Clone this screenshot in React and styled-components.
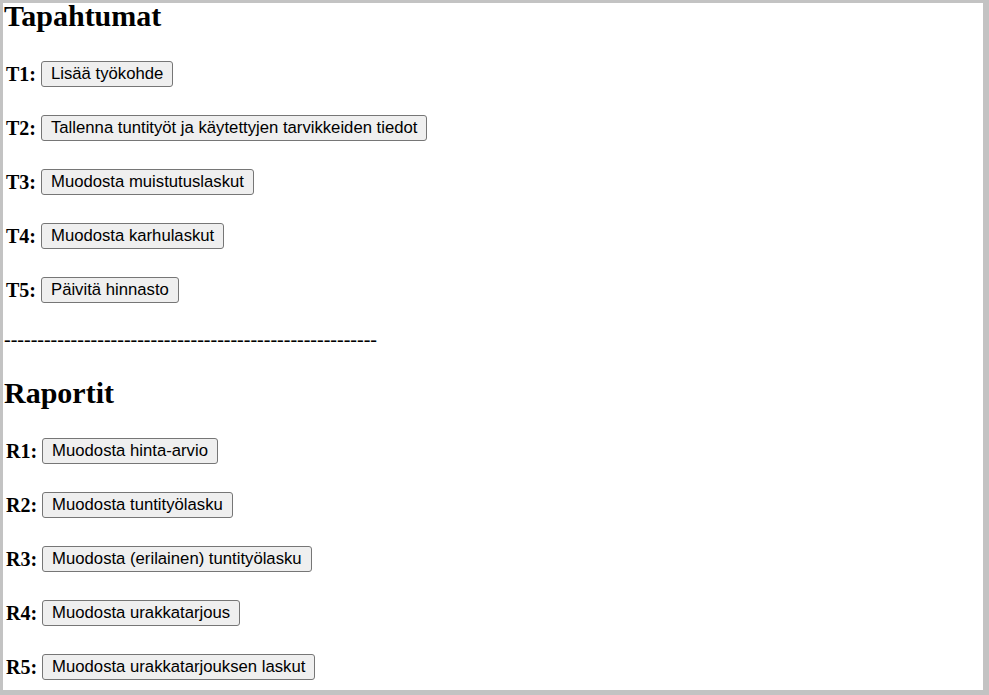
import React from 'react';
import styled, { createGlobalStyle } from 'styled-components';

const GlobalStyle = createGlobalStyle`
    html, body {
        margin: 0;
        padding: 0;
        background: #c3c3c3;
    }
`;

const Frame = styled.div`
    margin: 3px 6px 6px 3px;
    height: 686px;
    background: #ffffff;
    overflow: hidden;
    padding: 1px 0 0 1px;
    font-family: "Liberation Serif", "Times New Roman", serif;
    color: #000;
`;

const Heading = styled.h2`
    margin: ${(props) => props.$top}px 0 31px 0;
    font-size: 30px;
    line-height: 28px;
    font-weight: bold;
`;

const List = styled.div`
    display: flex;
    flex-direction: column;
    gap: 28px;
`;

const Row = styled.div`
    display: flex;
    align-items: center;
    gap: 5px;
    height: 26px;
    margin-left: 2px;
`;

const Label = styled.b`
    font-size: 20px;
    line-height: 26px;
    min-width: ${(props) => props.$width}px;
`;

const Button = styled.button`
    height: 26px;
    padding: 0 9px;
    font-family: "Liberation Sans", Arial, sans-serif;
    font-size: 16.7px;
    color: #000;
    background: #efefef;
    border: 1px solid #767676;
    border-radius: 3px;
`;

const Divider = styled.div`
    margin-top: 25px;
    font-size: 20px;
    line-height: 23px;
    white-space: nowrap;
`;

const events = [
    ['T1:', 'Lisää työkohde'],
    ['T2:', 'Tallenna tuntityöt ja käytettyjen tarvikkeiden tiedot'],
    ['T3:', 'Muodosta muistutuslaskut'],
    ['T4:', 'Muodosta karhulaskut'],
    ['T5:', 'Päivitä hinnasto']
];

const reports = [
    ['R1:', 'Muodosta hinta-arvio'],
    ['R2:', 'Muodosta tuntityölasku'],
    ['R3:', 'Muodosta (erilainen) tuntityölasku'],
    ['R4:', 'Muodosta urakkatarjous'],
    ['R5:', 'Muodosta urakkatarjouksen laskut']
];

const Section = ({ title, items, top, labelWidth }) => (
    <div>
        <Heading $top={top}>{title}</Heading>
        <List>
            {items.map(([label, text]) => (
                <Row key={label}>
                    <Label $width={labelWidth}>{label}</Label>
                    <Button type="button">{text}</Button>
                </Row>
            ))}
        </List>
    </div>
);

const App = () => (
    <>
        <GlobalStyle />
        <Frame>
            <Section title="Tapahtumat" items={events} top={-2} labelWidth={30} />
            <Divider>{'-'.repeat(56)}</Divider>
            <Section title="Raportit" items={reports} top={28} labelWidth={31} />
        </Frame>
    </>
);

export default App;
